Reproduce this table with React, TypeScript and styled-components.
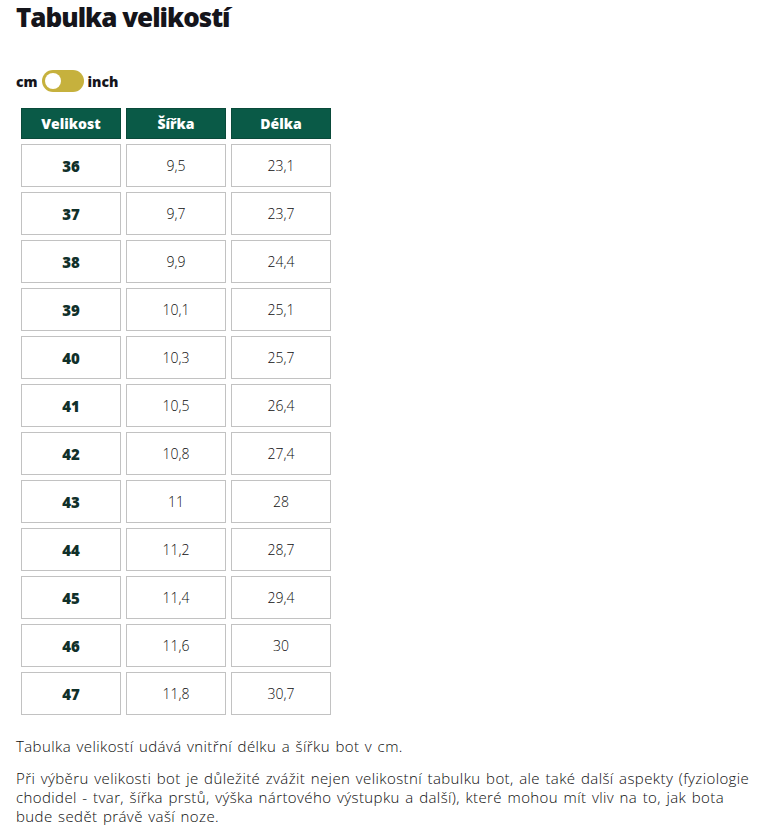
import React from "react";
import styled, { createGlobalStyle } from "styled-components";

const Global = createGlobalStyle`
  html, body { margin: 0; padding: 0; background: #fff; }
  body { font-family: "Open Sans", "Noto Sans", sans-serif; color: #111; }
`;

const Page = styled.div`
  padding: 0 4px 0 16px;
`;

const Title = styled.h1`
  margin: 0;
  padding-top: 1px;
  font-size: 26px;
  line-height: 32px;
  font-weight: 800;
  color: #15151b;
  letter-spacing: -1px;
`;

const ToggleRow = styled.div`
  display: flex;
  align-items: center;
  gap: 4px;
  margin-top: 37px;
  font-size: 14px;
  font-weight: 800;
  color: #15151b;
`;

const Switch = styled.span`
  display: inline-flex;
  align-items: center;
  width: 42px;
  height: 22px;
  border-radius: 11px;
  background: #c6b13d;
  padding: 0 3px;
  box-sizing: border-box;
`;

const Knob = styled.span`
  width: 16px;
  height: 16px;
  border-radius: 50%;
  background: #fff;
`;

const Table = styled.table`
  border-collapse: separate;
  border-spacing: 5px;
  margin: 11px 0 0;
`;

const HeadCell = styled.th`
  width: 98px;
  height: 29px;
  padding: 0;
  background: #0a5a47;
  border: 1px solid #0a4a3a;
  color: #fff;
  font-size: 14px;
  font-weight: 800;
  text-align: center;
`;

const Cell = styled.td<{ $bold?: boolean }>`
  height: 41px;
  padding: 0;
  border: 1px solid #c2c2c2;
  text-align: center;
  font-size: ${(p) => (p.$bold ? "15px" : "14px")};
  font-weight: ${(p) => (p.$bold ? 800 : 300)};
  color: ${(p) => (p.$bold ? "#10302a" : "#0d0d0d")};
`;

const Text = styled.p`
  margin: 17px 0 0;
  font-size: 15px;
  line-height: 19px;
  font-weight: 300;
  letter-spacing: 0.4px;
  word-spacing: 1.2px;
  color: #0d0d0d;
  & + & { margin-top: 13px; }
`;

const rows: [string, string, string][] = [
  ["36", "9,5", "23,1"],
  ["37", "9,7", "23,7"],
  ["38", "9,9", "24,4"],
  ["39", "10,1", "25,1"],
  ["40", "10,3", "25,7"],
  ["41", "10,5", "26,4"],
  ["42", "10,8", "27,4"],
  ["43", "11", "28"],
  ["44", "11,2", "28,7"],
  ["45", "11,4", "29,4"],
  ["46", "11,6", "30"],
  ["47", "11,8", "30,7"],
];

export default function App() {
  return (
    <>
      <Global />
      <Page>
        <Title>Tabulka velikostí</Title>
        <ToggleRow>
          <span>cm</span>
          <Switch>
            <Knob />
          </Switch>
          <span>inch</span>
        </ToggleRow>
        <Table>
          <thead>
            <tr>
              <HeadCell>Velikost</HeadCell>
              <HeadCell>Šířka</HeadCell>
              <HeadCell>Délka</HeadCell>
            </tr>
          </thead>
          <tbody>
            {rows.map((r) => (
              <tr key={r[0]}>
                <Cell $bold>{r[0]}</Cell>
                <Cell>{r[1]}</Cell>
                <Cell>{r[2]}</Cell>
              </tr>
            ))}
          </tbody>
        </Table>
        <Text>Tabulka velikostí udává vnitřní délku a šířku bot v cm.</Text>
        <Text>
          Při výběru velikosti bot je důležité zvážit nejen velikostní tabulku bot, ale také další aspekty (fyziologie
          chodidel - tvar, šířka prstů, výška nártového výstupku a další), které mohou mít vliv na to, jak bota bude
          sedět právě vaší noze.
        </Text>
      </Page>
    </>
  );
}
